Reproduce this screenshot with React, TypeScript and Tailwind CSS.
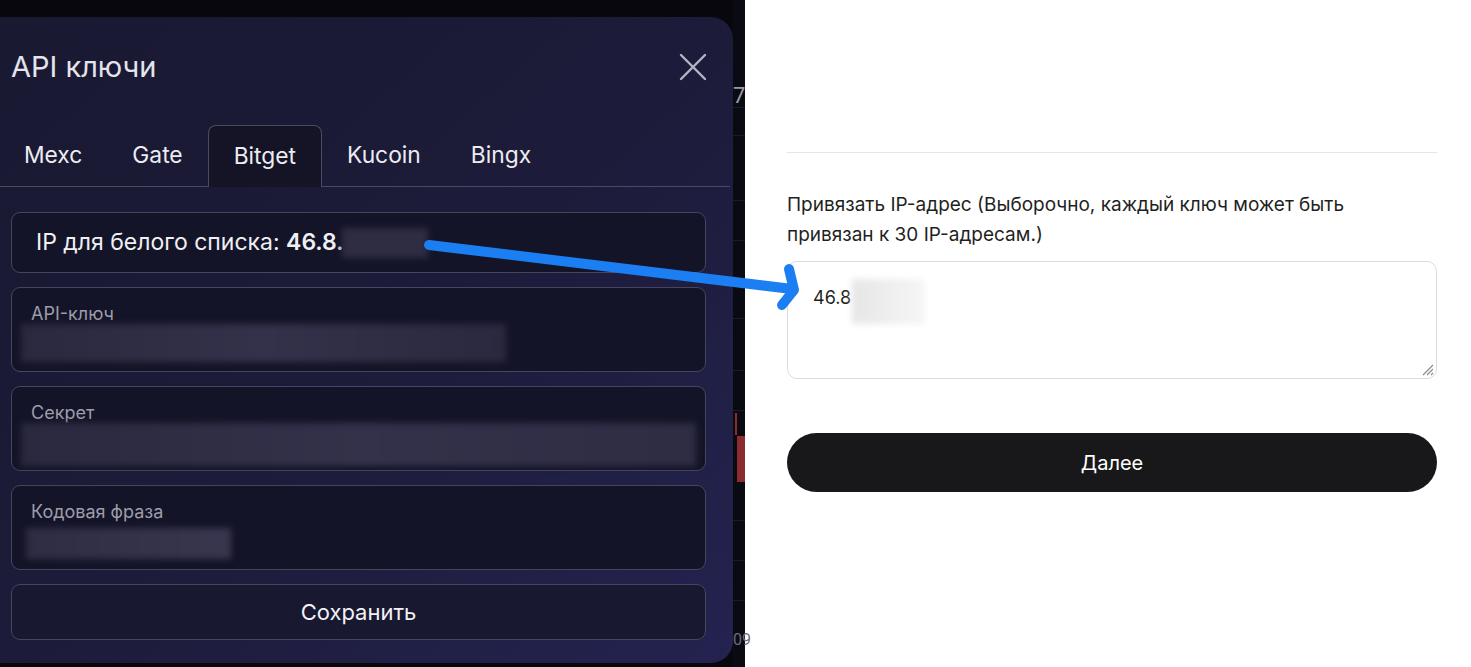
import React from "react";

const tabs = ["Mexc", "Gate", "Bitget", "Kucoin", "Bingx"];

function Blur({ className }: { className: string }) {
  return <div className={`blur-[3px] ${className}`} />;
}

function KeyField({ label, bar }: { label: string; bar: string }) {
  return (
    <div className="h-[85px] rounded-[9px] border border-[#45455c] bg-[#141428] pt-[14px]">
      <div className="pl-[19px] text-[18px] leading-[24px] text-[#9d9dab]">{label}</div>
      <Blur className={`mt-[-2px] ${bar}`} />
    </div>
  );
}

function ChartStrip() {
  // кусок графика за модалкой
  return (
    <div className="relative h-full w-[12px] bg-[#0a0a12]">
      <div className="absolute left-0 top-[84px] text-[22px] leading-[24px] text-[#9a9aa6] font-['Roboto',sans-serif]">7</div>
      {[107, 135, 200, 240, 318, 370, 410, 520, 560, 600].map((y) => (
        <div key={y} className="absolute left-0 h-px w-full bg-[#1c1c28]" style={{ top: y }} />
      ))}
      <div className="absolute left-[2px] top-[413px] h-[22px] w-[2px] bg-[#8b2c30]" />
      <div className="absolute left-[4px] top-[436px] h-[46px] w-[8px] bg-[#8b2c30]" />
      <div className="absolute left-0 top-[630px] text-[16px] leading-[20px] text-[#6c6c78] font-['Roboto',sans-serif]">09</div>
    </div>
  );
}

export default function App() {
  return (
    <div className="relative flex h-[667px] w-[1471px] overflow-hidden bg-white font-['Inter',sans-serif]">
      {/* left: dark modal */}
      <div className="flex h-full w-[745px] bg-[#07070d]">
        <div className="mt-[17px] flex h-[646px] w-[733px] flex-col rounded-r-[22px] bg-gradient-to-br from-[#1a1932] via-[#1c1b39] to-[#242350]">
          <div className="flex items-center justify-between pl-[11px] pr-[26px] pt-[33px]">
            <h1 className="text-[29px] leading-[34px] text-[#e4e4ec]">API ключи</h1>
            <svg width="28" height="28" viewBox="0 0 28 28" className="text-[#b4b4c4]">
              <path d="M2 2 L26 26 M26 2 L2 26" stroke="currentColor" strokeWidth="2.4" strokeLinecap="round" />
            </svg>
          </div>

          <div className="mt-[41px] mr-[3px] flex h-[62px] border-b border-[#4a4a60]">
            {tabs.map((t, i) => (
              <div
                key={t}
                className={`flex items-center text-[22.8px] text-[#ececf2] ${i === 0 ? "pl-[24px] pr-[25px]" : "px-[25px]"} ${
                  t === "Bitget" ? "mb-[-1px] rounded-t-[8px] border border-b-0 border-[#4a4a60] bg-[#141426]" : ""
                }`}
              >
                {t}
              </div>
            ))}
          </div>

          <div className="ml-[11px] mt-[25px] flex w-[695px] flex-col gap-[14px]">
            <div className="flex h-[61px] items-center rounded-[9px] border border-[#45455c] bg-[#141428] pl-[24px]">
              <span className="text-[23px] text-[#f0f0f4]">
                IP для белого списка: <span className="font-semibold">46.8.</span>
              </span>
              <Blur className="ml-[-2px] h-[30px] w-[86px] bg-[#2e2d42]" />
            </div>
            <KeyField label="API-ключ" bar="ml-[9px] h-[38px] w-[485px] bg-gradient-to-r from-[#2a293f] via-[#33324a] to-[#2a293f]" />
            <KeyField label="Секрет" bar="ml-[9px] h-[43px] w-[675px] bg-gradient-to-r from-[#2a293f] via-[#33324a] to-[#2e2d44]" />
            <KeyField label="Кодовая фраза" bar="ml-[14px] mt-[4px] h-[31px] w-[205px] bg-gradient-to-r from-[#2e2d44] to-[#38374f]" />
            <button className="h-[56px] rounded-[9px] border border-[#45455c] bg-[#181830] text-[22px] text-[#f2f2f6]">
              Сохранить
            </button>
          </div>
        </div>
        <ChartStrip />
      </div>

      {/* right: white form */}
      <div className="flex w-[726px] flex-col pl-[42px] pr-[34px] pt-[152px]">
        <div className="h-px bg-[#e6e6e6]" />
        <p className="mt-[37px] text-[19px] leading-[30px] text-[#1f1f1f]">
          Привязать IP-адрес (Выборочно, каждый ключ может быть
          <br />
          привязан к 30 IP-адресам.)
        </p>
        <div className="relative mt-[11px] h-[118px] rounded-[10px] border border-[#dcdcdc] bg-white">
          <div className="flex items-start pl-[25px] pt-[17px]">
            <span className="mt-[7px] text-[18px] leading-[24px] text-[#1f1f1f]">46.8</span>
            <Blur className="ml-[1px] h-[45px] w-[73px] bg-gradient-to-r from-[#e6e6e6] to-[#f6f6f6]" />
          </div>
          <svg width="14" height="14" viewBox="0 0 14 14" className="absolute bottom-[2px] right-[2px] text-[#8a8a8a]">
            <path d="M13 3 L3 13 M13 7 L7 13 M13 11 L11 13" stroke="currentColor" strokeWidth="1.2" />
          </svg>
        </div>
        <button className="mt-[54px] h-[59px] rounded-full bg-[#18181b] text-[20px] text-white">Далее</button>
      </div>

      {/* blue arrow annotation */}
      <svg className="pointer-events-none absolute left-0 top-0" width="1471" height="667">
        <g stroke="#1b7ff3" strokeWidth="10" strokeLinecap="round" strokeLinejoin="round" fill="none">
          <path d="M429 245 L792 289" />
          <path d="M789 269 L794 290 L782 305" />
        </g>
      </svg>
    </div>
  );
}
